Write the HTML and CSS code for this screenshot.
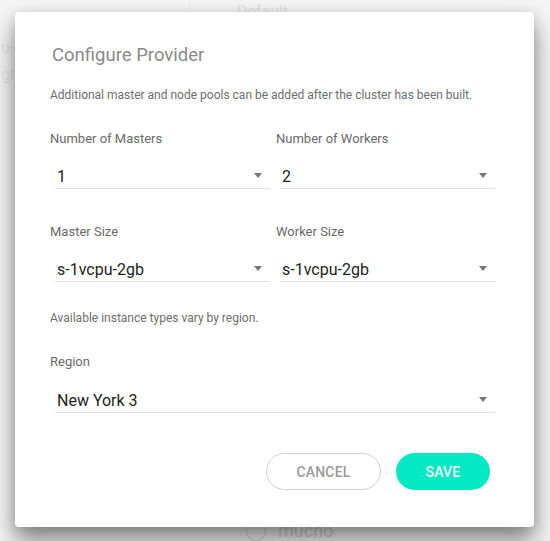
FILE: index.html
```html
<!DOCTYPE html>
<html>
<head>
<meta charset="utf-8">
<link rel="stylesheet" href="styles.css">
</head>
<body>
<div class="page">
  <div class="bg-top">
    <div class="bg-divider"></div>
    <div class="bg-default">Default</div>
  </div>
  <div class="bg-left">
    <div>u-2</div>
    <div>gb</div>
  </div>
  <div class="bg-bottom">
    <span class="bg-radio"></span>
    <span class="bg-label">mucho</span>
  </div>
</div>

<div class="dialog">
  <h2 class="title">Configure Provider</h2>
  <p class="desc">Additional master and node pools can be added after the cluster has been built.</p>

  <div class="grid">
    <div class="field">
      <div class="label">Number of Masters</div>
      <div class="select"><span>1</span><span class="arrow"></span></div>
    </div>
    <div class="field">
      <div class="label">Number of Workers</div>
      <div class="select"><span>2</span><span class="arrow"></span></div>
    </div>
    <div class="field">
      <div class="label">Master Size</div>
      <div class="select"><span>s-1vcpu-2gb</span><span class="arrow"></span></div>
    </div>
    <div class="field">
      <div class="label">Worker Size</div>
      <div class="select"><span>s-1vcpu-2gb</span><span class="arrow"></span></div>
    </div>
  </div>

  <p class="desc desc-2">Available instance types vary by region.</p>

  <div class="field field-wide">
    <div class="label">Region</div>
    <div class="select"><span>New York 3</span><span class="arrow"></span></div>
  </div>

  <div class="actions">
    <button class="btn btn-cancel">CANCEL</button>
    <button class="btn btn-save">SAVE</button>
  </div>
</div>
</body>
</html>
```

FILE: styles.css
```css
* { box-sizing: border-box; }
html, body {
  margin: 0;
  padding: 0;
  width: 550px;
  height: 541px;
  overflow: hidden;
  background: #f4f4f4;
  font-family: Roboto, "Noto Sans", sans-serif;
}

.page {
  position: relative;
  width: 550px;
  height: 541px;
  color: #e4e4e4;
}
.bg-top {
  display: flex;
  height: 30px;
}
.bg-divider {
  width: 190px;
  border-right: 1px solid #ececec;
}
.bg-default {
  margin-left: 47px;
  margin-top: 2px;
  font-size: 16px;
  color: #e2e2e2;
}
.bg-left {
  margin-top: 4px;
  margin-left: 1px;
  font-size: 16px;
  line-height: 27px;
  color: #e6e6e6;
}
.bg-bottom {
  position: absolute;
  left: 246px;
  top: 520px;
  display: flex;
  align-items: center;
  gap: 12px;
  color: #b4b4b4;
  font-size: 18px;
  opacity: 0.5;
}
.bg-radio {
  width: 20px;
  height: 20px;
  border: 1px solid #b0b0b0;
  border-radius: 50%;
}

.dialog {
  position: absolute;
  left: 15px;
  top: 12px;
  width: 519px;
  height: 515px;
  background: #fff;
  border-radius: 4px;
  padding: 32px 34px 0 35px;
  box-shadow: 0 14px 24px rgba(0,0,0,0.45), 0 2px 12px rgba(0,0,0,0.12);
}

.title {
  margin: 0;
  padding-left: 2px;
  font-size: 18.5px;
  line-height: 22px;
  font-weight: 400;
  color: #8a8a8a;
}
.desc {
  margin: 21px 0 0;
  font-size: 12px;
  line-height: 16px;
  color: #6e6e6e;
}
.desc-2 { margin-top: 28px; }

.grid {
  display: grid;
  grid-template-columns: 225px 225px;
  row-gap: 35px;
  margin-top: 28px;
}
.label {
  font-size: 13px;
  line-height: 16px;
  color: #6a6a6a;
}
.field:nth-child(2n) .label { padding-left: 1px; }
.select {
  margin: 0 5px;
  padding: 20px 8px 1px 2px;
  border-bottom: 1px solid #e0e0e0;
  display: flex;
  align-items: center;
  justify-content: space-between;
  font-size: 16px;
  line-height: 20px;
  color: #222;
}
.arrow {
  width: 0;
  height: 0;
  border-left: 4.5px solid transparent;
  border-right: 4.5px solid transparent;
  border-top: 5px solid #777;
  margin-top: -4px;
}
.field-wide { margin-top: 28px; }
.field-wide .select { padding-top: 21px; }

.actions {
  display: flex;
  justify-content: flex-end;
  gap: 15px;
  margin-top: 40px;
  padding-right: 10px;
}
.btn {
  height: 37px;
  border-radius: 19px;
  font-family: Roboto, "Noto Sans", sans-serif;
  font-size: 14px;
  font-weight: 500;
  letter-spacing: 0.2px;
  cursor: pointer;
}
.btn-cancel {
  width: 115px;
  background: #fff;
  border: 1px solid #cfcfcf;
  color: #9a9a9a;
}
.btn-save {
  width: 94px;
  background: #02e9c4;
  border: none;
  color: #fff;
}
```
